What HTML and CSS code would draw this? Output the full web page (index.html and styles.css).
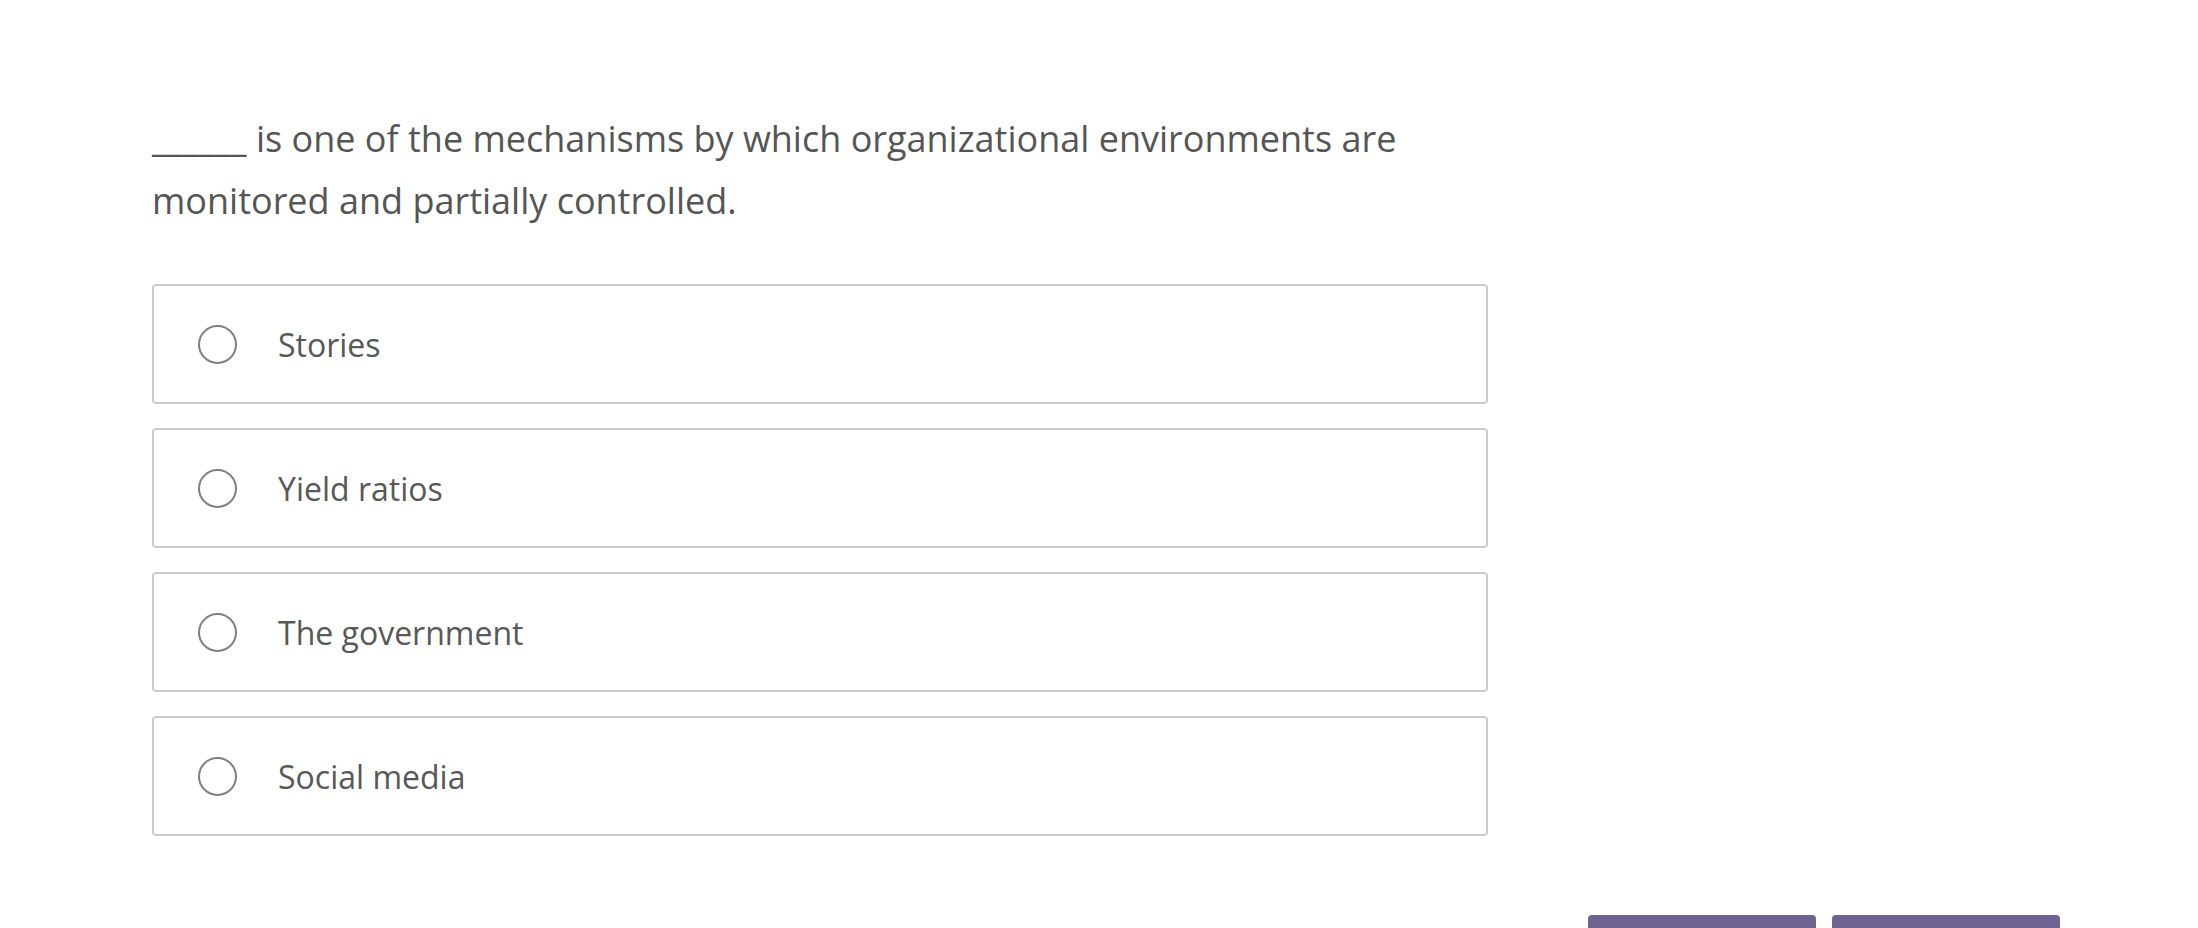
FILE: index.html
```html
<!DOCTYPE html>
<html lang="en">
<head>
<meta charset="utf-8">
<title>Question</title>
<link rel="stylesheet" href="styles.css">
</head>
<body>
<main class="page">
  <section class="question">
    <p class="prompt">______ is one of the mechanisms by which organizational environments are monitored and partially controlled.</p>
    <ul class="options">
      <li class="option"><span class="radio"></span><span class="label">Stories</span></li>
      <li class="option"><span class="radio"></span><span class="label">Yield ratios</span></li>
      <li class="option"><span class="radio"></span><span class="label">The government</span></li>
      <li class="option"><span class="radio"></span><span class="label">Social media</span></li>
    </ul>
  </section>
  <footer class="actions">
    <button class="btn" type="button" aria-label="Previous"></button>
    <button class="btn" type="button" aria-label="Next"></button>
  </footer>
</main>
</body>
</html>
```

FILE: styles.css
```css
* { box-sizing: border-box; }
html, body {
  margin: 0;
  padding: 0;
  background: #ffffff;
}
body {
  font-family: "Open Sans", "Liberation Sans", sans-serif;
  color: #555555;
}
.page {
  padding: 108px 138px 0 152px;
}
.question {
  width: 1336px;
}
.prompt {
  margin: 0;
  font-size: 36px;
  line-height: 61.6px;
  color: #555555;
}
.options {
  list-style: none;
  margin: 53px 0 0 0;
  padding: 0;
  display: flex;
  flex-direction: column;
  gap: 24px;
}
.option {
  display: flex;
  align-items: center;
  height: 120px;
  border: 2px solid #cccccc;
  border-radius: 4px;
  padding-left: 44px;
}
.radio {
  width: 39px;
  height: 39px;
  border: 2px solid #808080;
  border-radius: 50%;
  flex: none;
}
.label {
  margin-left: 41px;
  font-size: 32px;
  color: #585858;
}
.actions {
  display: flex;
  justify-content: flex-end;
  gap: 16px;
  margin-top: 79px;
}
.btn {
  width: 228px;
  height: 62px;
  border: none;
  border-radius: 4px;
  background: #6f6190;
  padding: 0;
}
```
